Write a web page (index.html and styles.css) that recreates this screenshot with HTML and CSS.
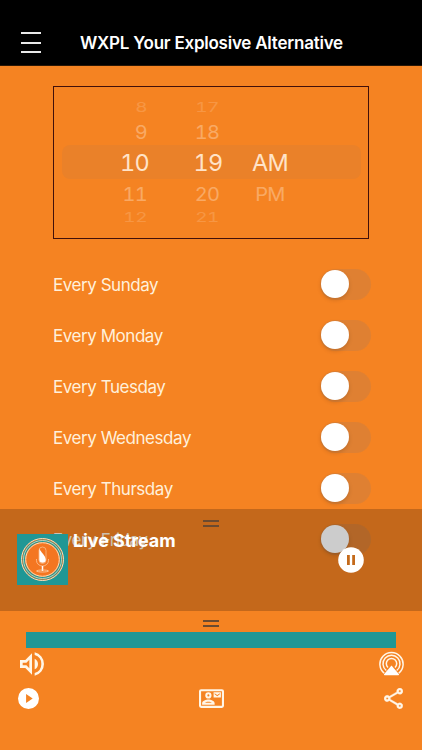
FILE: index.html
```html
<!DOCTYPE html>
<html lang="en">
<head>
    <meta charset="UTF-8">
    <meta name="viewport" content="width=device-width, initial-scale=1.0">
    <title>WXPL Your Explosive Alternative</title>
    <link rel="stylesheet" href="styles.css">
</head>
<body>
    <header class="header">
        <button class="menu-button" aria-label="Menu">
            <span></span><span></span><span></span>
        </button>
        <h1 class="title">WXPL Your Explosive Alternative</h1>
    </header>

    <main class="content">
        <div class="picker">
            <div class="picker-band"></div>
            <div class="picker-column hours">
                <span class="far">8</span>
                <span class="near">9</span>
                <span class="current">10</span>
                <span class="near">11</span>
                <span class="far">12</span>
            </div>
            <div class="picker-column minutes">
                <span class="far">17</span>
                <span class="near">18</span>
                <span class="current">19</span>
                <span class="near">20</span>
                <span class="far">21</span>
            </div>
            <div class="picker-column period">
                <span class="far"></span>
                <span class="near"></span>
                <span class="current">AM</span>
                <span class="near">PM</span>
                <span class="far"></span>
            </div>
        </div>

        <div class="days">
            <div class="day"><span class="day-name">Every Sunday</span><span class="switch"></span></div>
            <div class="day"><span class="day-name">Every Monday</span><span class="switch"></span></div>
            <div class="day"><span class="day-name">Every Tuesday</span><span class="switch"></span></div>
            <div class="day"><span class="day-name">Every Wednesday</span><span class="switch"></span></div>
            <div class="day"><span class="day-name">Every Thursday</span><span class="switch"></span></div>
            <div class="day"><span class="day-name">Every Friday</span><span class="switch"></span></div>
        </div>

        <div class="now-playing">
            <div class="grabber"></div>
            <div class="now-row">
                <svg class="artwork" viewBox="0 0 51 51">
                    <rect width="51" height="51" fill="#209795"/>
                    <circle cx="25.5" cy="25.5" r="21" fill="#f47621" stroke="#f8dfbd"/>
                    <circle cx="25.5" cy="25.5" r="18.8" fill="none" stroke="#209795" stroke-width="2.6"/>
                    <circle cx="25.5" cy="25.5" r="19" fill="none" stroke="#f8dfbd" stroke-width=".8"/>
                    <circle cx="25.5" cy="25.5" r="16.8" fill="#f47621" stroke="#f8dfbd"/>
                    <rect x="22" y="13" width="7" height="16.5" rx="3.5" fill="none" stroke="#fbc79a" stroke-width=".7"/>
                    <path d="M22.3 14.5c1.5 4 6.500 7 6.500 11.500a3.300 3.300 0 0 1-6.500 0z" fill="#fff"/>
                    <path d="M19.500 25v1.500a6 5.500 0 0 0 12 0V25" fill="none" stroke="#fbc79a" stroke-width=".8"/>
                    <path d="M25.500 32v5" stroke="#fff" stroke-width="1.500"/>
                    <ellipse cx="25.500" cy="37" rx="6" ry="1" fill="none" stroke="#fbd3ad" stroke-width=".8"/>
                </svg>
                <span class="stream-name">Live Stream</span>
                <svg class="pause" viewBox="0 0 26 26">
                    <circle cx="13" cy="13" r="12.800" fill="#fff"/>
                    <path d="M9 8h2.800v10H9zM14.200 8H17v10h-2.800z" fill="#c46a1b"/>
                </svg>
            </div>
        </div>
    </main>

    <footer class="player">
        <div class="grabber"></div>
        <div class="progress"></div>
        <div class="controls">
            <svg class="icon-volume" viewBox="3 3 18 18" fill="#fff6e8">
                <path d="M3 9v6h4l5 5V4L7 9H3zm7-.170v6.340L7.830 13H5v-2h2.830L10 8.830zM16.500 12A4.500 4.500 0 0 0 14 7.970v8.050A4.470 4.470 0 0 0 16.500 12zM14 3.230v2.060a7 7 0 0 1 0 13.420v2.060a9 9 0 0 0 0-17.540z"/>
            </svg>
            <svg class="icon-airplay" viewBox="0 0 25 25">
                <g fill="none" stroke="#fff6e8" stroke-width="1.500">
                    <path d="M5.200 22.200a11.600 11.600 0 1 1 14.600 0"/>
                    <path d="M7.300 19.500a8.500 8.500 0 1 1 10.400 0"/>
                    <path d="M9 16.500a5.200 5.200 0 1 1 7 0"/>
                </g>
                <path d="M12.500 14.500l7.300 8.500q.8 1.300-.6 1.300H5.800q-1.400 0-.6-1.300z" fill="#fff"/>
            </svg>
        </div>
        <div class="controls bottom">
            <svg class="icon-play" viewBox="2 2 20 20" fill="#fff">
                <path d="M12 2a10 10 0 1 0 0 20 10 10 0 0 0 0-20zM9.700 16.300V7.700L16 12z"/>
            </svg>
            <svg class="icon-contact" viewBox="0 3 24 18" fill="#fff6e8">
                <path fill-rule="evenodd" d="M2 3h20a2 2 0 0 1 2 2v14a2 2 0 0 1-2 2H2a2 2 0 0 1-2-2V5a2 2 0 0 1 2-2zm0 2v14h20V5z"/>
                <path d="M21 6h-7v5h7V6zm-1 2l-2.500 1.750L15 8V7l2.500 1.750L20 7v1z"/>
                <path fill-rule="evenodd" d="M9 12a3 3 0 1 0 0-6 3 3 0 0 0 0 6zm0-4a1 1 0 1 1 0 2 1 1 0 0 1 0-2zM15 16.590C15 14.090 11.030 13 9 13s-6 1.080-6 3.580V18h12zM5.480 16c.740-.500 2.220-1 3.520-1s2.770.490 3.520 1z"/>
            </svg>
            <svg class="icon-share" viewBox="3 2 18 20" fill="#fff6e8" stroke="#fff6e8" stroke-width=".3">
                <path fill-rule="evenodd" d="M18 16.080c-.760 0-1.440.300-1.960.770L8.910 12.700c.050-.230.090-.460.090-.700s-.040-.470-.090-.700l7.050-4.110c.540.500 1.250.810 2.040.810 1.660 0 3-1.340 3-3s-1.340-3-3-3-3 1.340-3 3c0 .240.040.470.090.700L8.040 9.810C7.500 9.310 6.790 9 6 9c-1.660 0-3 1.340-3 3s1.340 3 3 3c.790 0 1.500-.310 2.040-.810l7.120 4.160c-.050.210-.080.430-.080.650 0 1.610 1.310 2.920 2.920 2.920s2.920-1.310 2.920-2.920-1.310-2.920-2.920-2.920zM18 4a1 1 0 1 1 0 2 1 1 0 0 1 0-2zM6 13a1 1 0 1 1 0-2 1 1 0 0 1 0 2zm12 7a1 1 0 1 1 0-2 1 1 0 0 1 0 2z"/>
            </svg>
        </div>
    </footer>
</body>
</html>
```
FILE: styles.css
```css
* {
    box-sizing: border-box;
}

body {
    margin: 0;
    height: 750px;
    display: flex;
    flex-direction: column;
    background-color: #f58322;
    font-family: Inter, "Liberation Sans", sans-serif;
    overflow: hidden;
}

svg {
    display: block;
    flex: none;
}

.header {
    height: 66px;
    padding: 20px 0 0 21px;
    display: flex;
    align-items: center;
    background-color: black;
    border-bottom: 1px solid #2b1705;
}

.menu-button {
    width: 20px;
    height: 21px;
    padding: 0;
    border: none;
    background: none;
    display: flex;
    flex-direction: column;
    justify-content: space-between;
}

.menu-button span {
    width: 20px;
    height: 2px;
    background-color: #e9e9e9;
}

.title {
    margin: 0 0 0 39px;
    color: white;
    font-size: 17px;
    font-weight: 600;
    letter-spacing: -0.23px;
    white-space: nowrap;
}

.content {
    position: relative;
    height: 545px;
    padding: 20px 51px 0 53px;
    overflow: hidden;
}

/* time picker */
.picker {
    position: relative;
    width: 316px;
    height: 153px;
    border: 1px solid #42100a;
    display: flex;
    padding: 8px 0 0 59px;
}

.picker-band {
    position: absolute;
    left: 8px;
    top: 58px;
    width: 299px;
    height: 34px;
    border-radius: 8px;
    background-color: rgba(116, 116, 128, 0.08);
}

.picker-column {
    position: relative;
    display: grid;
    grid-template-rows: 25px 24px 37px 25px 23px;
    align-items: center;
    color: #ffe3c8;
    font-variant-numeric: tabular-nums;
}

.hours {
    width: 36px;
    justify-items: end;
}

.minutes {
    width: 36px;
    margin-left: 41px;
    justify-items: center;
}

.period {
    width: 50px;
    margin-left: 19px;
    justify-items: center;
}

.picker-column span {
    line-height: 24px;
}

.current {
    font-size: 23.5px;
    letter-spacing: -0.8px;
}

.near {
    font-size: 20px;
    letter-spacing: -0.7px;
    opacity: 0.4;
    transform: scaleY(0.94);
}

.hours .near,
.hours .far {
    margin-right: 2px;
}

.minutes .near,
.minutes .far {
    margin-right: 2px;
}

.far {
    font-size: 19px;
    letter-spacing: -0.5px;
    opacity: 0.2;
    transform: scaleY(0.7);
}

/* days */
.days {
    padding-top: 20px;
}

.day {
    height: 51px;
    display: flex;
    align-items: center;
    justify-content: space-between;
}

.day-name {
    color: #fff0db;
    font-size: 17px;
    letter-spacing: -0.45px;
}

.switch {
    width: 51px;
    height: 31px;
    padding: 1px;
    border-radius: 16px;
    background-color: rgba(120, 120, 128, 0.17);
}

.switch::before {
    content: "";
    display: block;
    width: 28px;
    height: 28px;
    border-radius: 50%;
    background-color: white;
    box-shadow: 0 2px 4px rgba(0, 0, 0, 0.15);
}

/* mini player, lies over the list */
.now-playing {
    position: absolute;
    left: 0;
    right: 0;
    bottom: 0;
    height: 102px;
    padding-top: 11px;
    background-color: rgba(0, 0, 0, 0.2);
}

.grabber {
    width: 16px;
    height: 7px;
    margin: 0 auto;
    border-top: 2px solid #6b4a30;
    border-bottom: 2px solid #6b4a30;
}

.now-row {
    display: flex;
    align-items: flex-start;
    padding: 7px 58px 0 17px;
}

.artwork {
    width: 51px;
    height: 51px;
}

.stream-name {
    flex: 1;
    margin: -4px 0 0 5px;
    color: white;
    font-size: 18px;
    font-weight: 700;
    line-height: 22px;
    letter-spacing: -0.1px;
}

.pause {
    width: 26px;
    height: 26px;
    margin-top: 13px;
}

/* bottom panel */
.player {
    height: 139px;
    padding-top: 9px;
}

.progress {
    height: 16px;
    margin: 5px 26px 0;
    background-color: #209795;
}

.controls {
    display: flex;
    align-items: center;
    justify-content: space-between;
    padding: 3px 18px 0 20px;
}

.bottom {
    padding: 12px 19px 0 18px;
}

.icon-volume {
    width: 24px;
    height: 24px;
}

.icon-airplay {
    width: 25px;
    height: 25px;
}

.icon-play {
    width: 21px;
    height: 21px;
}

.icon-contact {
    width: 25px;
    height: 19px;
}

.icon-share {
    width: 19px;
    height: 21px;
}
```
